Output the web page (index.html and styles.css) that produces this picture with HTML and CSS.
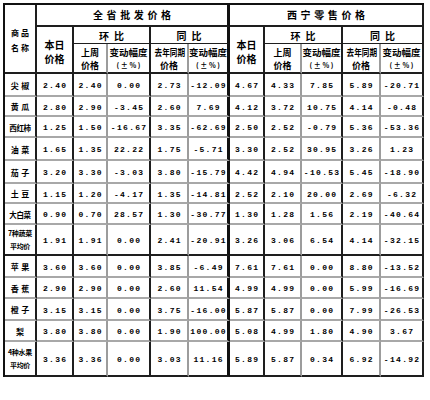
FILE: index.html
```html
<!DOCTYPE html>
<html lang="zh">
<head>
<meta charset="utf-8">
<title>价格表</title>
<link rel="stylesheet" href="styles.css">
</head>
<body>
<div class="wrap">
<table class="price">
  <colgroup>
    <col class="c1"><col class="c2"><col class="c3"><col class="c4"><col class="c5"><col class="c6">
    <col class="c7"><col class="c8"><col class="c9"><col class="c10"><col class="c11">
  </colgroup>
  <thead>
    <tr class="h1">
      <th rowspan="3" class="name-h"><div>商 品</div><div>名 称</div></th>
      <th colspan="5" class="big mid">全省批发价格</th>
      <th colspan="5" class="big">西宁零售价格</th>
    </tr>
    <tr class="h2">
      <th rowspan="2" class="today"><div>本日</div><div>价格</div></th>
      <th colspan="2" class="cmp thin">环比</th>
      <th colspan="2" class="cmp thin mid">同比</th>
      <th rowspan="2" class="today"><div>本日</div><div>价格</div></th>
      <th colspan="2" class="cmp thin">环比</th>
      <th colspan="2" class="cmp thin">同比</th>
    </tr>
    <tr class="h3">
      <th class="sub gr"><div>上周</div><div>价格</div></th>
      <th class="sub"><div class="chg">变动幅度</div><div class="pm">(±%)</div></th>
      <th class="sub gr"><div class="sq">去年同期</div><div>价格</div></th>
      <th class="sub mid"><div class="chg">变动幅度</div><div class="pm">(±%)</div></th>
      <th class="sub gr"><div>上周</div><div>价格</div></th>
      <th class="sub"><div class="chg">变动幅度</div><div class="pm">(±%)</div></th>
      <th class="sub gr"><div class="sq">去年同期</div><div>价格</div></th>
      <th class="sub"><div class="chg">变动幅度</div><div class="pm">(±%)</div></th>
    </tr>
  </thead>
  <tbody>
    <tr class="r23"><td class="nm">尖椒</td><td>2.40</td><td class="gr">2.40</td><td>0.00</td><td class="gr">2.73</td><td class="mid">-12.09</td><td>4.67</td><td class="gr">4.33</td><td>7.85</td><td class="gr">5.89</td><td>-20.71</td></tr>
    <tr class="r20"><td class="nm">黄瓜</td><td>2.80</td><td class="gr">2.90</td><td>-3.45</td><td class="gr">2.60</td><td class="mid">7.69</td><td>4.12</td><td class="gr">3.72</td><td>10.75</td><td class="gr">4.14</td><td>-0.48</td></tr>
    <tr class="r21"><td class="nm n3">西红柿</td><td>1.25</td><td class="gr">1.50</td><td>-16.67</td><td class="gr">3.35</td><td class="mid">-62.69</td><td>2.50</td><td class="gr">2.52</td><td>-0.79</td><td class="gr">5.36</td><td>-53.36</td></tr>
    <tr class="r23"><td class="nm">油菜</td><td>1.65</td><td class="gr">1.35</td><td>22.22</td><td class="gr">1.75</td><td class="mid">-5.71</td><td>3.30</td><td class="gr">2.52</td><td>30.95</td><td class="gr">3.26</td><td>1.23</td></tr>
    <tr class="r23"><td class="nm">茄子</td><td>3.20</td><td class="gr">3.30</td><td>-3.03</td><td class="gr">3.80</td><td class="mid">-15.79</td><td>4.42</td><td class="gr">4.94</td><td>-10.53</td><td class="gr">5.45</td><td>-18.90</td></tr>
    <tr class="r20"><td class="nm">土豆</td><td>1.15</td><td class="gr">1.20</td><td>-4.17</td><td class="gr">1.35</td><td class="mid">-14.81</td><td>2.52</td><td class="gr">2.10</td><td>20.00</td><td class="gr">2.69</td><td>-6.32</td></tr>
    <tr class="r21"><td class="nm n3">大白菜</td><td>0.90</td><td class="gr">0.70</td><td>28.57</td><td class="gr">1.30</td><td class="mid">-30.77</td><td>1.30</td><td class="gr">1.28</td><td>1.56</td><td class="gr">2.19</td><td>-40.64</td></tr>
    <tr class="r31 dk"><td class="nm avg"><div>7种蔬菜</div><div>平均价</div></td><td>1.91</td><td class="gr">1.91</td><td>0.00</td><td class="gr">2.41</td><td class="mid">-20.91</td><td>3.26</td><td class="gr">3.06</td><td>6.54</td><td class="gr">4.14</td><td>-32.15</td></tr>
    <tr class="r22"><td class="nm">苹果</td><td>3.60</td><td class="gr">3.60</td><td>0.00</td><td class="gr">3.85</td><td class="mid">-6.49</td><td>7.61</td><td class="gr">7.61</td><td>0.00</td><td class="gr">8.80</td><td>-13.52</td></tr>
    <tr class="r21"><td class="nm">香蕉</td><td>2.90</td><td class="gr">2.90</td><td>0.00</td><td class="gr">2.60</td><td class="mid">11.54</td><td>4.99</td><td class="gr">4.99</td><td>0.00</td><td class="gr">5.99</td><td>-16.69</td></tr>
    <tr class="r22"><td class="nm">橙子</td><td>3.15</td><td class="gr">3.15</td><td>0.00</td><td class="gr">3.75</td><td class="mid">-16.00</td><td>5.87</td><td class="gr">5.87</td><td>0.00</td><td class="gr">7.99</td><td>-26.53</td></tr>
    <tr class="r21"><td class="nm">梨</td><td>3.80</td><td class="gr">3.80</td><td>0.00</td><td class="gr">1.90</td><td class="mid">100.00</td><td>5.08</td><td class="gr">4.99</td><td>1.80</td><td class="gr">4.90</td><td>3.67</td></tr>
    <tr class="r35 dk"><td class="nm avg"><div>4种水果</div><div>平均价</div></td><td>3.36</td><td class="gr">3.36</td><td>0.00</td><td class="gr">3.03</td><td class="mid">11.16</td><td>5.89</td><td class="gr">5.87</td><td>0.34</td><td class="gr">6.92</td><td>-14.92</td></tr>
  </tbody>
</table>
</div>
</body>
</html>
```
FILE: styles.css
```css
html, body {
  margin: 0;
  padding: 0;
  background: #ffffff;
}

.wrap {
  padding: 3px 0 0 3px;
}

.price {
  border-collapse: separate;
  border-spacing: 0;
  table-layout: fixed;
  width: 421px;
  border-left: 2px solid #111;
  border-top: 2px solid #111;
  font-family: "Noto Sans CJK SC", "Noto Sans", sans-serif;
  font-weight: 700;
  color: #000;
}

.c1 { width: 32px; }
.c2 { width: 37px; }
.c3 { width: 34px; }
.c4 { width: 43px; }
.c5 { width: 38px; }
.c6 { width: 41px; }
.c7 { width: 35px; }
.c8 { width: 37px; }
.c9 { width: 41px; }
.c10 { width: 38px; }
.c11 { width: 43px; }

.price th,
.price td {
  box-sizing: border-box;
  padding: 0;
  border-right: 2px solid #1e1e1e;
  border-bottom: 2px solid #a8a8a8;
  text-align: center;
  vertical-align: middle;
  white-space: nowrap;
  overflow: hidden;
}

.price td {
  font-family: "Liberation Mono", "DejaVu Sans Mono", monospace;
  font-size: 8px;
  letter-spacing: 1.3px;
  padding-left: 1.3px;
  padding-top: 2px;
  line-height: 9px;
}

.price .gr { border-right: 2px solid #9c9c9c; }
.price .mid { border-right: 3px solid #111; }

/* header */
.h1 { height: 22px; }
.h2 { height: 17px; }
.h3 { height: 30px; }

.price th {
  border-bottom: 2px solid #1e1e1e;
  line-height: 12px;
}
.price th.thin { border-bottom: 1px solid #1e1e1e; }

.price th div {
  height: 13px;
  line-height: 13px;
}

.price th.name-h {
  font-size: 8px;
  padding-top: 3px;
}
.price th.name-h div {
  height: 15px;
  line-height: 15px;
}

.price th.big {
  font-size: 10px;
  letter-spacing: 3.6px;
  padding-left: 3.6px;
  line-height: 12px;
}

.price th.cmp {
  font-size: 10px;
  letter-spacing: 5px;
  padding-left: 5px;
  line-height: 11px;
}

.price th.today {
  font-size: 10px;
  padding-top: 4px;
}
.price th.today div {
  height: 14px;
  line-height: 14px;
}

.price th.sub {
  font-size: 9px;
  padding-top: 2px;
}

.price th .chg {
  font-size: 9.5px;
}

.price th .sq {
  font-size: 9.5px;
  transform: scaleX(0.8);
}

.price th .pm {
  font-size: 7px;
  letter-spacing: 1.6px;
  padding-left: 1.6px;
}

/* body rows */
.r20 { height: 20px; }
.r21 { height: 21px; }
.r22 { height: 22px; }
.r23 { height: 23px; }
.r31 { height: 31px; }
.r35 { height: 35px; }

.price tr.dk td { border-bottom: 2px solid #1e1e1e; }

.price td.nm {
  font-family: "Noto Sans CJK SC", "Noto Sans", sans-serif;
  font-size: 8px;
  letter-spacing: 2.4px;
  padding-left: 2.4px;
  padding-top: 1px;
}

.price td.n3 {
  font-size: 7.5px;
  letter-spacing: -0.4px;
  padding-left: 0;
}

.price td.avg {
  font-size: 7px;
  letter-spacing: -0.3px;
  padding-left: 0;
  padding-top: 1px;
}
.price td.avg div {
  height: 13px;
  line-height: 13px;
}
```
